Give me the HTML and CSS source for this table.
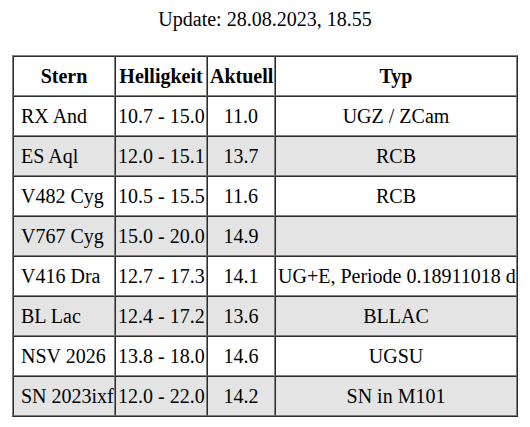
FILE: index.html
```html
<!DOCTYPE html>
<html lang="de">
<head>
<meta charset="utf-8">
<title>Veränderliche Sterne</title>
<link rel="stylesheet" href="styles.css">
</head>
<body>
<div class="update">Update: 28.08.2023, 18.55</div>
<table class="stars">
  <thead>
    <tr><th class="c-name">Stern</th><th class="c-range">Helligkeit</th><th class="c-cur">Aktuell</th><th class="c-typ">Typ</th></tr>
  </thead>
  <tbody>
    <tr><td class="name">&nbsp;RX And</td><td class="range">10.7 - 15.0</td><td class="cur">11.0</td><td class="typ">UGZ / ZCam</td></tr>
    <tr class="alt"><td class="name">&nbsp;ES Aql</td><td class="range">12.0 - 15.1</td><td class="cur">13.7</td><td class="typ">RCB</td></tr>
    <tr><td class="name">&nbsp;V482 Cyg</td><td class="range">10.5 - 15.5</td><td class="cur">11.6</td><td class="typ">RCB</td></tr>
    <tr class="alt"><td class="name">&nbsp;V767 Cyg</td><td class="range">15.0 - 20.0</td><td class="cur">14.9</td><td class="typ"></td></tr>
    <tr><td class="name">&nbsp;V416 Dra</td><td class="range">12.7 - 17.3</td><td class="cur">14.1</td><td class="typ">UG+E, Periode 0.18911018 d</td></tr>
    <tr class="alt"><td class="name">&nbsp;BL Lac</td><td class="range">12.4 - 17.2</td><td class="cur">13.6</td><td class="typ">BLLAC</td></tr>
    <tr><td class="name">&nbsp;NSV 2026</td><td class="range">13.8 - 18.0</td><td class="cur">14.6</td><td class="typ">UGSU</td></tr>
    <tr class="alt"><td class="name">&nbsp;SN 2023ixf</td><td class="range">12.0 - 22.0</td><td class="cur">14.2</td><td class="typ">SN in M101</td></tr>
  </tbody>
</table>
</body>
</html>
```

FILE: styles.css
```css
html, body {
  margin: 0;
  padding: 0;
  background: #ffffff;
}
body {
  padding: 8px 0 0 0;
  font-family: "Liberation Serif", "Times New Roman", serif;
  font-size: 20px;
  color: #000000;
}
.update {
  text-align: center;
  line-height: 23px;
}
.stars {
  margin: 24px auto 0 auto;
  width: 506px;
  table-layout: fixed;
  border: 1px outset #808080;
  border-spacing: 0;
  border-collapse: separate;
  font-family: "Liberation Serif", "Times New Roman", serif;
  font-size: 20px;
}
.stars th,
.stars td {
  box-sizing: border-box;
  font-family: "Liberation Serif", "Times New Roman", serif;
  font-size: 20px;
  border: 1px inset #808080;
  padding: 7px 2px;
  line-height: 24px;
  white-space: nowrap;
  overflow: visible;
}
.stars .c-name { width: 102px; }
.stars .c-range { width: 92px; }
.stars .c-cur { width: 68px; }
.stars .c-typ { width: 242px; }
.stars th {
  font-weight: bold;
  text-align: center;
}
.stars .name,
.stars .range {
  text-align: left;
}
.stars .cur,
.stars .typ {
  text-align: center;
}
.stars tr.alt td {
  background: #e4e4e4;
}
```
